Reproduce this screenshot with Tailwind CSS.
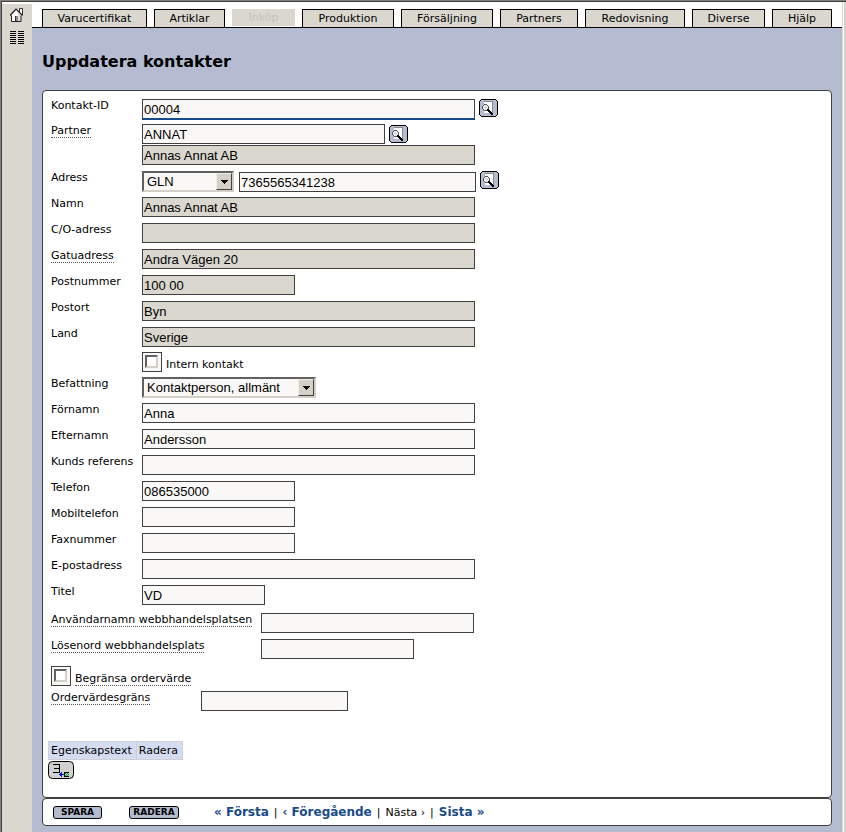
<!DOCTYPE html>
<html lang="sv">
<head>
    <meta charset="UTF-8">
    <meta name="viewport" content="width=device-width, initial-scale=1.0">
    <title>Uppdatera kontakter</title>
    <script src="https://cdn.jsdelivr.net/npm/@tailwindcss/browser@4"></script>
</head>
<body class="flex min-h-screen flex-col bg-white border-l border-t border-[#808080] font-['DejaVu_Sans',sans-serif] text-[11px] leading-[13px] text-black">

    <!-- Shared icons -->
    <svg class="hidden">
        <symbol id="icon-search" viewBox="0 0 19 18" shape-rendering="crispEdges">
            <path d="M2 0h15v1h1v1h1v14h-1v1h-1v1H2v-1H1v-1H0V2h1V1h1z" fill="#000"/>
            <path d="M2 1h15v1h1v14h-1v1H2v-1H1V2h1z" fill="#b5bbd1"/>
            <path d="M5 2h9v12H5z" fill="#8a8a8a"/>
            <path d="M6 3h7v11H5V3z" fill="#fff"/>
            <path d="M5 5h3v1h1v1h1v3H9v1H8v1H5v-1H4v-1H3V7h1V6h1z" fill="#555"/>
            <path d="M5 6h3v1h1v3H8v1H5v-1H4V7h1z" fill="#eef1f4"/>
            <path d="M6 7h1v1H6zM5 8h1v1H5zM7 8h1v1H7zM6 9h1v1H6z" fill="#c3ccd4"/>
            <path d="M8 10h2v1h1v1h1v1h1v1h1v2h-2v-1h-1v-1h-1v-1H9v-1H8z" fill="#000"/>
        </symbol>
    </svg>

    <div class="flex grow border-l border-t border-[#404040]">
        <!-- Sidebar -->
        <nav class="mt-[2px] flex w-[30px] shrink-0 flex-col items-center gap-2 bg-[#dad7cf] pt-1">
            <a href="#" aria-label="Hem">
                <svg class="h-[15px] w-[14px]" viewBox="0 0 14 15">
                    <path d="M2 7l4.500-5L11 7v7H2z" fill="#fff"/>
                    <path d="M6.500 2L11 7v7H8V6z" fill="#ddd"/>
                    <path d="M9.500 4V.5h3V7" fill="#fff" stroke="#333"/>
                    <path d="M0 7.500L6 1l6.500 6.500" fill="none" stroke="#222" stroke-width="1.200"/>
                    <path d="M1.500 7.500v6h9.500v-6" fill="none" stroke="#222"/>
                    <path d="M5 8h3v5H5z" fill="#888"/>
                    <path d="M5 8h1v5H5z" fill="#333"/>
                </svg>
            </a>
            <a href="#" aria-label="Meny">
                <svg class="h-[13px] w-[14px]" viewBox="0 0 14 13" shape-rendering="crispEdges">
                    <path d="M0 0h6v1H0zM8 0h6v1H8zM0 2h6v1H0zM8 2h6v1H8zM0 4h6v1H0zM8 4h6v1H8zM0 6h6v1H0zM8 6h6v1H8zM0 8h6v1H0zM8 8h6v1H8zM0 10h6v1H0zM8 10h6v1H8zM0 12h6v1H0zM8 12h6v1H8z" fill="#000"/>
                </svg>
            </a>
        </nav>

        <div class="flex min-w-0 grow flex-col bg-[#b5bbd1]">
            <!-- Tabs -->
            <nav class="flex h-[26px] items-end gap-[7px] border-b border-black bg-white px-[10px] text-center text-[11px] leading-[17px]">
                <a href="#" class="grow-[103] basis-0 border border-b-0 border-black bg-[#dad7cf]">Varucertifikat</a>
                <a href="#" class="grow-[69] basis-0 border border-b-0 border-black bg-[#dad7cf]">Artiklar</a>
                <span class="mb-px grow-[61] basis-0 border-x border-[#dad7cf] bg-[#dad7cf] text-[#c4c2bd]">Inköp</span>
                <a href="#" class="grow-[90] basis-0 border border-b-0 border-black bg-[#dad7cf]">Produktion</a>
                <a href="#" class="grow-[90] basis-0 border border-b-0 border-black bg-[#dad7cf]">Försäljning</a>
                <a href="#" class="grow-[76] basis-0 border border-b-0 border-black bg-[#dad7cf]">Partners</a>
                <a href="#" class="grow-[98] basis-0 border border-b-0 border-black bg-[#dad7cf]">Redovisning</a>
                <a href="#" class="grow-[71] basis-0 border border-b-0 border-black bg-[#dad7cf]">Diverse</a>
                <a href="#" class="grow-[58] basis-0 border border-b-0 border-black bg-[#dad7cf]">Hjälp</a>
            </nav>

            <main class="flex grow flex-col px-[10px] pb-[6px]">
                <h1 class="pt-6 pb-[18px] text-[16px] leading-5 font-bold">Uppdatera kontakter</h1>

                <form class="flex grow flex-col">
                    <section class="grow rounded-[4px] border border-[#404040] bg-white px-2 pt-2">
                        <div class="flex h-[25px] items-start">
                            <label for="kontakt-id" class="w-[91px]">Kontakt-ID</label>
                            <input id="kontakt-id" value="00004" class="h-[21px] w-[333px] border border-b-2 border-[#404040] border-b-[#174a8a] bg-[#f9f8f6] px-px font-['Liberation_Sans',sans-serif] text-[13px] outline-none">
                            <button type="button" aria-label="Sök kontakt" class="ml-1"><svg class="h-[18px] w-[19px]"><use href="#icon-search"/></svg></button>
                        </div>
                        <div class="flex h-[21px] items-start">
                            <div class="w-[91px]"><label for="partner" class="inline-block border-b border-dotted border-[#555]">Partner</label></div>
                            <input id="partner" value="ANNAT" class="h-5 w-[243px] border border-[#404040] bg-[#f9f8f6] px-px font-['Liberation_Sans',sans-serif] text-[13px]">
                            <button type="button" aria-label="Sök partner" class="mt-px ml-1"><svg class="h-[18px] w-[19px]"><use href="#icon-search"/></svg></button>
                        </div>
                        <div class="flex h-[26px] items-start pl-[91px]">
                            <input aria-label="Partnernamn" readonly value="Annas Annat AB" class="h-5 w-[333px] border border-[#404040] bg-[#dad7cf] px-px font-['Liberation_Sans',sans-serif] text-[13px]">
                        </div>
                        <div class="flex h-[26px] items-start">
                            <label for="adress" class="w-[91px]">Adress</label>
                            <div class="relative mr-[5px] w-[92px]">
                                <select id="adress" class="h-[21px] w-full appearance-none border-2 border-[#606060] border-r-[#d4d0c8] border-b-[#d4d0c8] bg-[#f9f8f6] px-[3px] font-['Liberation_Sans',sans-serif] text-[13px] leading-4"><option>GLN</option></select>
                                <span class="pointer-events-none absolute top-[2px] right-[2px] flex h-[17px] w-4 items-center justify-center border border-[#f0eee8] border-r-[#404040] border-b-[#404040] bg-[#d4d0c8]">
                                    <svg class="h-1 w-[7px]" viewBox="0 0 7 4" shape-rendering="crispEdges"><path d="M0 0h7v1H6v1H5v1H4v1H3V3H2V2H1V1H0z"/></svg>
                                </span>
                            </div>
                            <input aria-label="GLN-nummer" value="7365565341238" class="mt-px h-5 w-[237px] border border-[#404040] bg-[#f9f8f6] px-px font-['Liberation_Sans',sans-serif] text-[13px]">
                            <button type="button" aria-label="Sök adress" class="ml-1"><svg class="h-[18px] w-[19px]"><use href="#icon-search"/></svg></button>
                        </div>
                        <div class="flex h-[26px] items-start">
                            <label for="namn" class="w-[91px]">Namn</label>
                            <input id="namn" readonly value="Annas Annat AB" class="h-5 w-[333px] border border-[#404040] bg-[#dad7cf] px-px font-['Liberation_Sans',sans-serif] text-[13px]">
                        </div>
                        <div class="flex h-[26px] items-start">
                            <label for="co" class="w-[91px]">C/O-adress</label>
                            <input id="co" readonly class="h-5 w-[333px] border border-[#404040] bg-[#dad7cf] px-px font-['Liberation_Sans',sans-serif] text-[13px]">
                        </div>
                        <div class="flex h-[26px] items-start">
                            <div class="w-[91px]"><label for="gata" class="inline-block border-b border-dotted border-[#555]">Gatuadress</label></div>
                            <input id="gata" readonly value="Andra Vägen 20" class="h-5 w-[333px] border border-[#404040] bg-[#dad7cf] px-px font-['Liberation_Sans',sans-serif] text-[13px]">
                        </div>
                        <div class="flex h-[26px] items-start">
                            <label for="postnummer" class="w-[91px]">Postnummer</label>
                            <input id="postnummer" readonly value="100 00" class="h-5 w-[153px] border border-[#404040] bg-[#dad7cf] px-px font-['Liberation_Sans',sans-serif] text-[13px]">
                        </div>
                        <div class="flex h-[26px] items-start">
                            <label for="postort" class="w-[91px]">Postort</label>
                            <input id="postort" readonly value="Byn" class="h-5 w-[333px] border border-[#404040] bg-[#dad7cf] px-px font-['Liberation_Sans',sans-serif] text-[13px]">
                        </div>
                        <div class="flex h-[25px] items-start">
                            <label for="land" class="w-[91px]">Land</label>
                            <input id="land" readonly value="Sverige" class="h-5 w-[333px] border border-[#404040] bg-[#dad7cf] px-px font-['Liberation_Sans',sans-serif] text-[13px]">
                        </div>
                        <div class="flex h-[25px] items-start pl-[91px]">
                            <span class="flex h-5 w-5 border border-[#404040] bg-[#f9f8f6] p-[2px]">
                                <input id="intern" type="checkbox" class="h-[13px] w-[13px] appearance-none border-2 border-[#606060] border-r-[#d4d0c8] border-b-[#d4d0c8] bg-white">
                            </span>
                            <label for="intern" class="mt-[6px] ml-1">Intern kontakt</label>
                        </div>
                        <div class="flex h-[26px] items-start">
                            <label for="befattning" class="w-[91px]">Befattning</label>
                            <div class="relative w-[174px]">
                                <select id="befattning" class="h-[21px] w-full appearance-none border-2 border-[#606060] border-r-[#d4d0c8] border-b-[#d4d0c8] bg-[#f9f8f6] px-[3px] font-['Liberation_Sans',sans-serif] text-[13px] leading-4"><option>Kontaktperson, allmänt</option></select>
                                <span class="pointer-events-none absolute top-[2px] right-[2px] flex h-[17px] w-4 items-center justify-center border border-[#f0eee8] border-r-[#404040] border-b-[#404040] bg-[#d4d0c8]">
                                    <svg class="h-1 w-[7px]" viewBox="0 0 7 4" shape-rendering="crispEdges"><path d="M0 0h7v1H6v1H5v1H4v1H3V3H2V2H1V1H0z"/></svg>
                                </span>
                            </div>
                        </div>
                        <div class="flex h-[26px] items-start">
                            <label for="fornamn" class="w-[91px]">Förnamn</label>
                            <input id="fornamn" value="Anna" class="h-5 w-[333px] border border-[#404040] bg-[#f9f8f6] px-px font-['Liberation_Sans',sans-serif] text-[13px]">
                        </div>
                        <div class="flex h-[26px] items-start">
                            <label for="efternamn" class="w-[91px]">Efternamn</label>
                            <input id="efternamn" value="Andersson" class="h-5 w-[333px] border border-[#404040] bg-[#f9f8f6] px-px font-['Liberation_Sans',sans-serif] text-[13px]">
                        </div>
                        <div class="flex h-[26px] items-start">
                            <label for="referens" class="w-[91px] whitespace-nowrap">Kunds referens</label>
                            <input id="referens" class="h-5 w-[333px] border border-[#404040] bg-[#f9f8f6] px-px font-['Liberation_Sans',sans-serif] text-[13px]">
                        </div>
                        <div class="flex h-[26px] items-start">
                            <label for="telefon" class="w-[91px]">Telefon</label>
                            <input id="telefon" value="086535000" class="h-5 w-[153px] border border-[#404040] bg-[#f9f8f6] px-px font-['Liberation_Sans',sans-serif] text-[13px]">
                        </div>
                        <div class="flex h-[26px] items-start">
                            <label for="mobil" class="w-[91px]">Mobiltelefon</label>
                            <input id="mobil" class="h-5 w-[153px] border border-[#404040] bg-[#f9f8f6] px-px font-['Liberation_Sans',sans-serif] text-[13px]">
                        </div>
                        <div class="flex h-[26px] items-start">
                            <label for="fax" class="w-[91px]">Faxnummer</label>
                            <input id="fax" class="h-5 w-[153px] border border-[#404040] bg-[#f9f8f6] px-px font-['Liberation_Sans',sans-serif] text-[13px]">
                        </div>
                        <div class="flex h-[26px] items-start">
                            <label for="epost" class="w-[91px]">E-postadress</label>
                            <input id="epost" class="h-5 w-[333px] border border-[#404040] bg-[#f9f8f6] px-px font-['Liberation_Sans',sans-serif] text-[13px]">
                        </div>
                        <div class="flex h-7 items-start">
                            <label for="titel" class="w-[91px]">Titel</label>
                            <input id="titel" value="VD" class="h-5 w-[123px] border border-[#404040] bg-[#f9f8f6] px-px font-['Liberation_Sans',sans-serif] text-[13px]">
                        </div>
                        <div class="flex h-[26px] items-start">
                            <div class="w-[210px]"><label for="webbnamn" class="inline-block border-b border-dotted border-[#555] whitespace-nowrap">Användarnamn webbhandelsplatsen</label></div>
                            <input id="webbnamn" class="h-5 w-[213px] border border-[#404040] bg-[#f9f8f6] px-px font-['Liberation_Sans',sans-serif] text-[13px]">
                        </div>
                        <div class="flex h-[27px] items-start">
                            <div class="w-[210px]"><label for="losenord" class="inline-block border-b border-dotted border-[#555]">Lösenord webbhandelsplats</label></div>
                            <input id="losenord" type="password" class="h-5 w-[153px] border border-[#404040] bg-[#f9f8f6] px-px font-['Liberation_Sans',sans-serif] text-[13px]">
                        </div>
                        <div class="flex h-[25px] items-start">
                            <span class="flex h-5 w-5 border border-[#404040] bg-[#f9f8f6] p-[2px]">
                                <input id="begransa" type="checkbox" class="h-[13px] w-[13px] appearance-none border-2 border-[#606060] border-r-[#d4d0c8] border-b-[#d4d0c8] bg-white">
                            </span>
                            <label for="begransa" class="mt-[6px] ml-1 border-b border-dotted border-[#555]">Begränsa ordervärde</label>
                        </div>
                        <div class="flex h-5 items-start">
                            <div class="w-[150px]"><label for="ordergrans" class="inline-block border-b border-dotted border-[#555]">Ordervärdesgräns</label></div>
                            <input id="ordergrans" class="h-5 w-[147px] border border-[#404040] bg-[#f9f8f6] px-px font-['Liberation_Sans',sans-serif] text-[13px]">
                        </div>

                        <table class="mt-[30px] -ml-[3px] border-collapse">
                            <tr>
                                <th class="border border-[#d0d0d4] bg-[#d5dcf2] py-[2px] pr-1 pl-[2px] font-normal">Egenskapstext</th>
                                <th class="border border-[#d0d0d4] bg-[#d5dcf2] py-[2px] pr-1 pl-[2px] font-normal">Radera</th>
                            </tr>
                        </table>
                        <button type="button" aria-label="Lägg till rad" class="mt-px -ml-[3px] block">
                            <svg class="h-[18px] w-[26px]" viewBox="0 0 26 18">
                                <rect x="0.5" y="0.5" width="25" height="17" rx="4" fill="#d0d0d0" stroke="#000"/>
                                <g shape-rendering="crispEdges">
                                    <path d="M5 3h7v9H5v-1h6V8H6V7h5V4H5z" fill="#000"/>
                                    <path d="M11 13h1v-1h1v-1h1v2h2v1h-2v2h-1v-1h-1v-1h-1z" fill="#11c"/>
                                    <path d="M16 11h5v1h-4v3h4v1h-5z" fill="#000"/>
                                    <path d="M17 12h4v3h-4z" fill="#9d9"/>
                                    <path d="M17 12h1v1h-1zM19 12h1v1h-1zM18 13h1v1h-1zM20 13h1v1h-1zM17 14h1v1h-1zM19 14h1v1h-1z" fill="#2a5"/>
                                </g>
                            </svg>
                        </button>
                    </section>

                    <!-- Save, delete and record navigation -->
                    <footer class="flex h-7 items-center rounded-[4px] border border-[#404040] bg-white pl-[10px]">
                        <button type="submit" class="h-[13px] w-[49px] rounded-[3px] border border-black bg-[#b5bbd1] text-[9px] leading-[11px] font-bold">SPARA</button>
                        <button type="button" class="ml-[27px] h-[13px] w-[50px] rounded-[3px] border border-black bg-[#b5bbd1] text-[9px] leading-[11px] font-bold">RADERA</button>
                        <nav class="ml-[35px] flex gap-[5px] whitespace-nowrap">
                            <a href="#" class="text-[12px] font-bold text-[#174a8a]">« Första</a>
                            <span>|</span>
                            <a href="#" class="text-[12px] font-bold text-[#174a8a]">‹ Föregående</a>
                            <span>|</span>
                            <span>Nästa ›</span>
                            <span>|</span>
                            <a href="#" class="text-[12px] font-bold text-[#174a8a]">Sista »</a>
                        </nav>
                    </footer>
                </form>
            </main>
        </div>

        <!-- Window edge -->
        <div class="w-1 shrink-0 border-l border-[#dad7cf] bg-white">
            <div class="ml-px h-full bg-[#d4d0c8]"></div>
        </div>
    </div>
</body>
</html>
